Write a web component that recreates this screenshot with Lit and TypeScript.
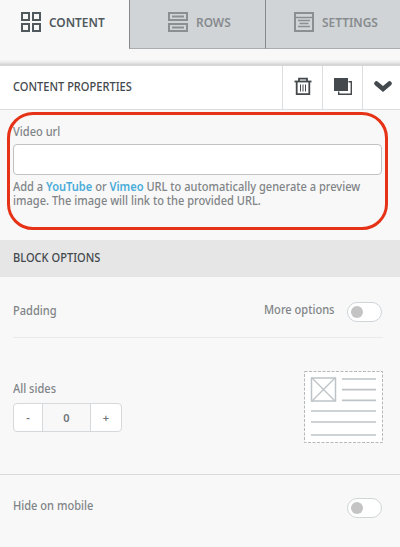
import { LitElement, html, css } from "lit";
import { customElement } from "lit/decorators.js";

@customElement("toggle-switch")
class ToggleSwitch extends LitElement {
  static styles = css`
    :host { display: block; box-sizing: border-box; width: 35px; height: 20px; border: 1px solid #d0d5d8; border-radius: 10px; background: #fff; padding: 3px; }
    .knob { width: 12px; height: 12px; border-radius: 50%; background: #c4c4c4; }
  `;
  render() { return html`<div class="knob"></div>`; }
}

@customElement("app-root")
class AppRoot extends LitElement {
  static styles = css`
    :host { display: block; width: 400px; height: 547px; overflow: hidden; background: #f8f8f8; color: #808487;
      font: 500 12px/14px "Noto Sans", "Open Sans", sans-serif; white-space: nowrap; }
    * { box-sizing: border-box; }
    svg { display: block; flex: none; }
    .narrow { display: block; width: max-content; transform: scaleX(.922); transform-origin: left top; }
    .narrow.end { transform-origin: right top; }
    .tabs { display: flex; height: 49px; font-size: 12.5px; font-weight: 600; }
    .tab { display: flex; width: 135px; height: 49px; padding: 12px 0 0; color: #878b8e; background: #d0d4d7; border-left: 1px solid #85898c; border-bottom: 1px solid #a9adb0; gap: 8px; }
    .tab span { padding-top: 4px; transform: scaleX(.95); transform-origin: left top; }
    .tab.active { width: 129px; padding-left: 21px; background: none; border: 0; color: #50595e; }
    .tab.rows { width: 136px; padding-left: 38px; }
    .tab.settings { padding-left: 28px; }
    .shade { height: 17px; background: linear-gradient(#f8f8f8 60%, #eee 75%, #cfcfcf 96%, #eee); }
    .head { display: flex; height: 44px; background: #fff; border-bottom: 1px solid #dcdfe1; }
    .title { flex: 1; padding: 14px 0 0 13px; color: #43484c; }
    .action { width: 40px; border-left: 1px solid #dcdfe1; display: flex; justify-content: center; padding-top: 11px; }
    .action.last { width: 38px; padding-left: 2px; }
    .ring { width: 381px; height: 118px; margin: 2px 0 10px 7px; border: 3px solid #e63216; border-radius: 26px; padding: 10px 3px 0; }
    .field { height: 31px; margin-top: 5px; background: #fff; border: 1px solid #c2c2c2; border-radius: 4px; width: 369px; }
    .help { margin-top: 5px; }
    .help b { font-weight: 600; color: #48acd9; }
    .section { height: 37px; background: #e6e6e6; color: #43484c; padding: 11px 13px 0; }
    .row { display: flex; justify-content: space-between; margin: 0 17px 0 13px; }
    .padding { height: 61px; padding-top: 25px; border-bottom: 1px solid #e9eaeb; }
    .padding .name { padding-top: 2px; }
    .more { display: flex; gap: 13px; padding-right: 1px; }
    .more span { padding-top: 1px; }
    .sides { height: 136px; padding-top: 33px; }
    .control { padding-top: 11px; }
    .stepper { display: flex; width: 109px; height: 29px; margin-top: 7px; border: 1px solid #d5d9dc; border-radius: 4px; background: #fff; text-align: center; line-height: 27px; font-size: 11px; font-weight: 600; color: #707477; }
    .stepper span { width: 28px; }
    .stepper .value { width: 49px; border: solid #d5d9dc; border-width: 0 1px; background: #f8f8f8; }
    .stepper .plus { width: 30px; }
    .mobile { border-top: 1px solid #d8dbdd; height: 73px; padding: 23px 18px 0 13px; display: flex; justify-content: space-between; }
    .mobile span { padding-top: 1px; }
  `;
  render() {
    return html`
      <nav class="tabs">
        <div class="tab active">
          <svg width="20" height="20" fill="none" stroke="#50595e" stroke-width="2"><path d="M1 1h7v7h-7zM12 1h7v7h-7zM1 12h7v7h-7zM12 12h7v7h-7z"/></svg><span>CONTENT</span>
        </div>
        <div class="tab rows">
          <svg width="20" height="20" fill="none" stroke="#8b8f92" stroke-width="2"><path d="M1 1h18v7H1zM1 12h18v7H1z"/><path d="M4 4.5h12M4 15.5h12"/></svg><span>ROWS</span>
        </div>
        <div class="tab settings">
          <svg width="20" height="20" fill="none" stroke="#8b8f92" stroke-width="2"><path d="M1 1h18v18H1z"/><path d="M2 5.5h16M4 8.6h12M5.5 11.5h9M4 14.5h12" stroke-width="1.5"/></svg><span>SETTINGS</span>
        </div>
      </nav>
      <div class="shade"></div>
      <header class="head">
        <div class="title"><span class="narrow">CONTENT PROPERTIES</span></div>
        <div class="action"><svg width="18" height="20" fill="none" stroke="#43494d"><path d="M.5 4.5h17" stroke-width="1.8"/><path d="M5 4V1.7h8V4M2.7 5v12.2h12.6V5" stroke-width="1.8"/><path d="M6.5 7.5v7M9 7.5v7M11.5 7.5v7"/></svg></div>
        <div class="action"><svg width="18" height="20"><path d="M4.7 4.7h12.6v12.6H4.7z" fill="#fff" stroke="#43494d" stroke-width="1.4"/><path d="M0 1h14.5v13.5H0z" fill="#fff"/><path d="M0 1h14v13H0z" fill="#43494d"/></svg></div>
        <div class="action last"><svg width="18" height="20" fill="none" stroke="#43494d" stroke-width="4.5"><path d="M2.5 6.500l6.500 5.500 6.500-5.500" stroke-linecap="round"/></svg></div>
      </header>
      <section class="ring">
        <div class="narrow">Video url</div>
        <div class="field"></div>
        <div class="help"><div class="narrow">Add a <b>YouTube</b> or <b>Vimeo</b> URL to automatically generate a preview</div><div class="narrow">image. The image will link to the provided URL.</div></div>
      </section>
      <div class="section"><span class="narrow">BLOCK OPTIONS</span></div>
      <div class="row padding"><span class="name narrow">Padding</span><div class="more"><span class="narrow end">More options</span><toggle-switch></toggle-switch></div></div>
      <div class="row sides">
        <div class="control"><div class="narrow">All sides</div><div class="stepper"><span>-</span><span class="value">0</span><span class="plus">+</span></div></div>
        <svg width="79" height="73" fill="none" stroke="#bdc3c6"><path d="M.5 .5h78v71H.5z" fill="#fff" stroke="#b5b9bc" stroke-dasharray="3 1.5"/><path d="M7.5 7h24v23h-24z" stroke-width="1.5"/><path d="M8 7l23 23M31 7L8 30" stroke-width="1.3"/><path d="M38 8h34M38 18.7h34M38 29.3h34M7 40h65M7 51h65M7 64h65" stroke-width="1.7"/></svg>
      </div>
      <div class="mobile"><span class="narrow">Hide on mobile</span><toggle-switch></toggle-switch></div>
    `;
  }
}
